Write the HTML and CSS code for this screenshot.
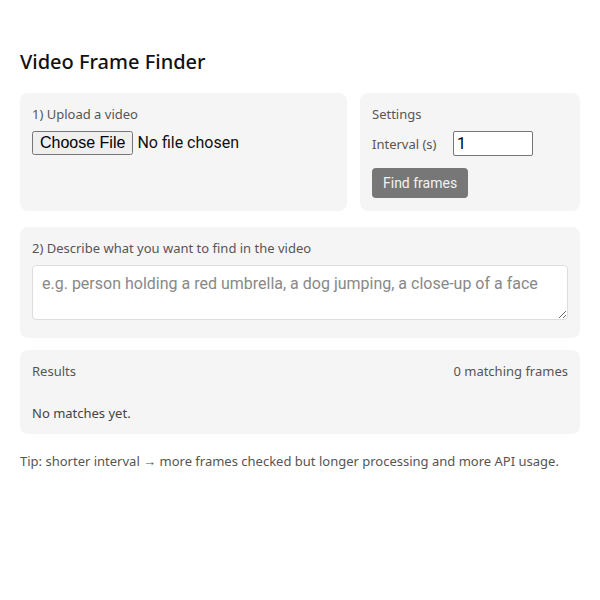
FILE: index.html
```html
<!DOCTYPE html>
<html lang="en">
<head>
    <meta charset="UTF-8">
    <meta name="viewport" content="width=device-width, initial-scale=1.0">
    <title>Video Frame Finder</title>
    <link rel="stylesheet" href="styles.css">
</head>
<body>

<div class="app">
    <h1>Video Frame Finder</h1>

    <!-- upload + settings -->
    <div class="top-row">
        <div class="card">
            <div class="label">1) Upload a video</div>
            <input type="file" id="video" accept="video/*" class="file-input">
        </div>
        <div class="card settings-card">
            <div class="label">Settings</div>
            <div class="interval-row">
                <label for="interval">Interval (s)</label>
                <input type="number" id="interval" value="1" min="1">
            </div>
            <button id="find-btn" class="find-btn">Find frames</button>
        </div>
    </div>

    <!-- prompt -->
    <div class="card prompt-card">
        <div class="label">2) Describe what you want to find in the video</div>
        <textarea id="query" placeholder="e.g. person holding a red umbrella, a dog jumping, a close-up of a face"></textarea>
    </div>

    <!-- results -->
    <div class="card results-card">
        <div class="results-head">
            <span class="label">Results</span>
            <span class="label" id="match-count">0 matching frames</span>
        </div>
        <div class="empty" id="results">No matches yet.</div>
    </div>

    <p class="tip">Tip: shorter interval → more frames checked but longer processing and more API usage.</p>
</div>

</body>
</html>
```

FILE: styles.css
```css
body {
    margin: 0;
    font-family: "Noto Sans", "Open Sans", Arial, sans-serif;
    color: #222;
    background: #fff;
}
.app {
    padding: 0 20px;
}
h1 {
    font-size: 20px;
    font-weight: 500;
    line-height: 28px;
    margin: 48px 0 17px;
    color: #111;
}
.card {
    background-color: #f5f5f5;
    border-radius: 8px;
    padding: 12px;
}
.label {
    font-size: 13px;
    line-height: 18px;
    color: #555;
}
.top-row {
    display: grid;
    grid-template-columns: minmax(0, 1fr) 220px;
    gap: 13px;
    margin-bottom: 16px;
}
.settings-card {
    padding-bottom: 13px;
}
.file-input {
    display: block;
    max-width: 100%;
    height: 25px;
    margin-top: 8px;
    font-family: Roboto, Arial, sans-serif;
    font-size: 16px;
    color: #111;
}
.interval-row {
    display: flex;
    align-items: center;
    margin-top: 8px;
}
.interval-row label {
    font-size: 13px;
    color: #555;
    width: 81px;
}
.interval-row input {
    width: 80px;
    height: 25px;
    box-sizing: border-box;
    font-family: Roboto, Arial, sans-serif;
    font-size: 16px;
    padding: 0 3px;
    border: 1px solid #767676;
    border-radius: 2px;
    -moz-appearance: textfield;
}
.interval-row input::-webkit-inner-spin-button,
.interval-row input::-webkit-outer-spin-button {
    -webkit-appearance: none;
    margin: 0;
}
.find-btn {
    display: block;
    margin-top: 12px;
    height: 30px;
    padding: 0 11px;
    background-color: #777;
    color: #f2f2f2;
    border: none;
    border-radius: 4px;
    font-family: Roboto, Arial, sans-serif;
    font-size: 14px;
    cursor: pointer;
}
.prompt-card {
    margin-bottom: 12px;
}
.prompt-card textarea {
    display: block;
    width: 100%;
    height: 55px;
    box-sizing: border-box;
    margin: 8px 0 6px;
    padding: 8px 9px;
    border: 1px solid #ddd;
    border-radius: 4px;
    background: #fff;
    font-family: Roboto, Arial, sans-serif;
    font-size: 16px;
    resize: vertical;
}
.prompt-card textarea::placeholder {
    color: #888;
}
.results-head {
    display: flex;
    justify-content: space-between;
}
.empty {
    margin-top: 24px;
    font-size: 13px;
    line-height: 18px;
    color: #444;
}
.tip {
    margin: 18px 0 0;
    font-size: 13px;
    line-height: 18px;
    color: #555;
}
```
